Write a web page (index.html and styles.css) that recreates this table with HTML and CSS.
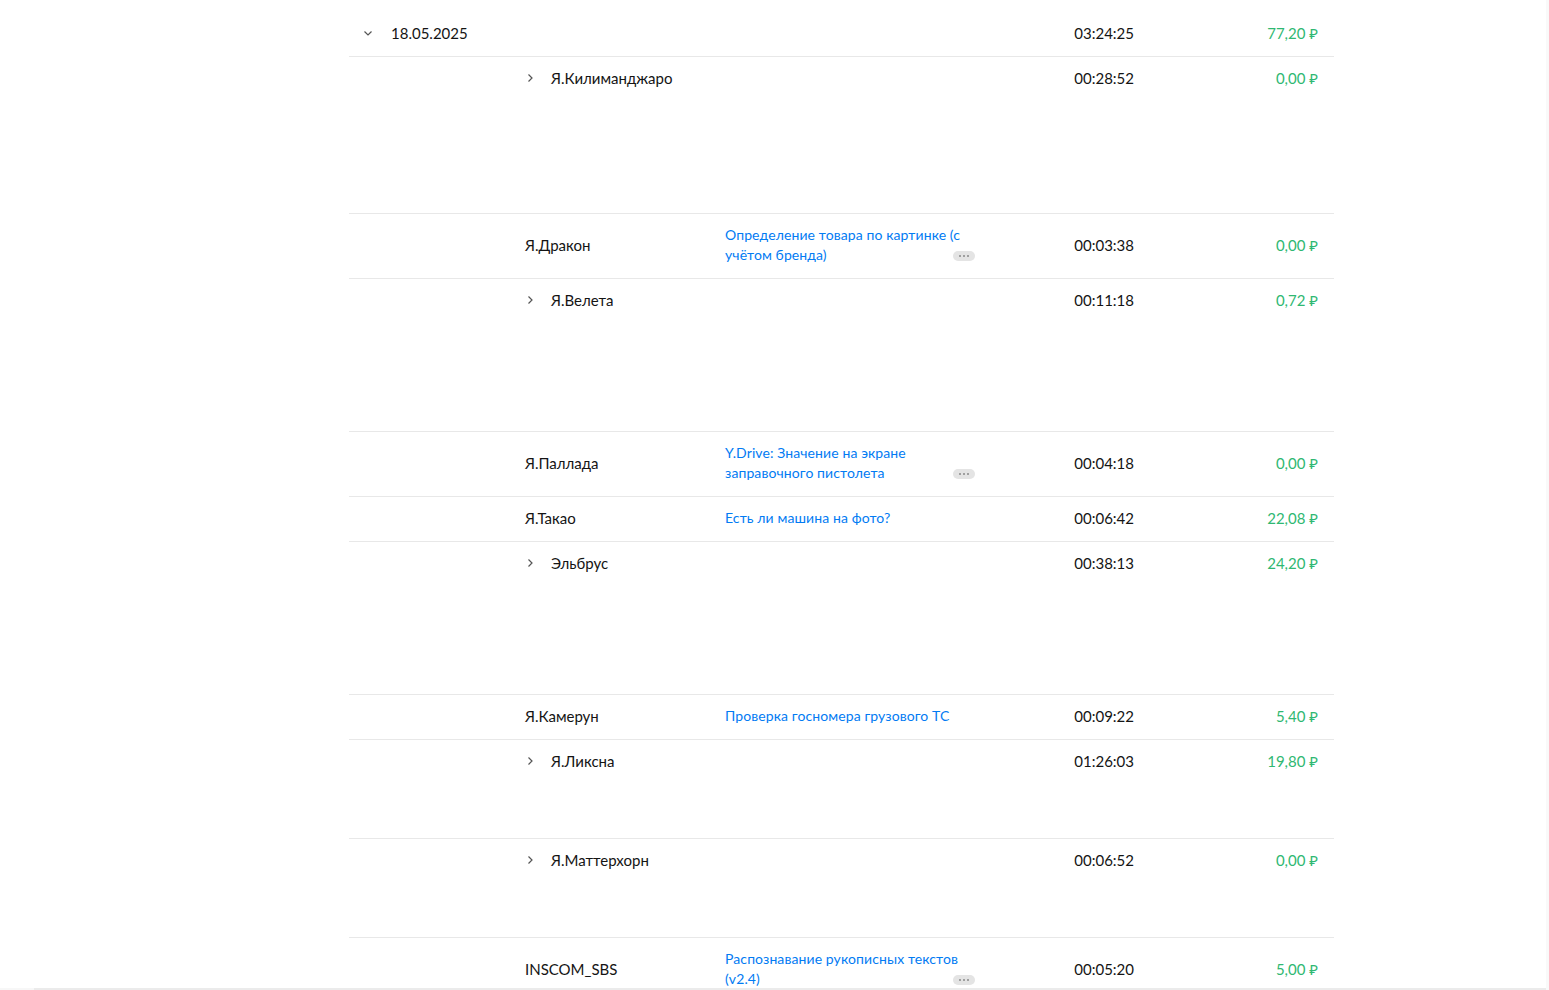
FILE: index.html
```html
<!DOCTYPE html>
<html lang="ru">
<head>
    <meta charset="UTF-8">
    <meta name="viewport" content="width=device-width, initial-scale=1.0">
    <title>Детализация по дням</title>
    <link rel="stylesheet" href="styles.css">
</head>
<body>

    <main class="page">
        <div class="table">

            <!-- Day group -->
            <div class="row row-date">
                <div class="cell-day">
                    <svg class="chevron" width="10" height="10" viewBox="0 0 10 10"><path d="M1.5 3.5 L5 7 L8.5 3.5" fill="none" stroke="#555" stroke-width="1.2"/></svg>
                    <span>18.05.2025</span>
                </div>
                <div class="cell-time">03:24:25</div>
                <div class="cell-cost">77,20 ₽</div>
            </div>

            <div class="row row-open row-h157">
                <div class="cell-name">
                    <svg class="chevron" width="10" height="10" viewBox="0 0 10 10"><path d="M3.5 1.5 L7 5 L3.5 8.5" fill="none" stroke="#555" stroke-width="1.2"/></svg>
                    <span>Я.Килиманджаро</span>
                </div>
                <div class="cell-task"></div>
                <div class="cell-time">00:28:52</div>
                <div class="cell-cost">0,00 ₽</div>
            </div>

            <div class="row">
                <div class="cell-name">Я.Дракон</div>
                <div class="cell-task">
                    <a href="#" class="task-link">Определение товара по картинке (с учётом бренда)</a>
                    <span class="more"><i></i><i></i><i></i></span>
                </div>
                <div class="cell-time">00:03:38</div>
                <div class="cell-cost">0,00 ₽</div>
            </div>

            <div class="row row-open row-h153">
                <div class="cell-name">
                    <svg class="chevron" width="10" height="10" viewBox="0 0 10 10"><path d="M3.5 1.5 L7 5 L3.5 8.5" fill="none" stroke="#555" stroke-width="1.2"/></svg>
                    <span>Я.Велета</span>
                </div>
                <div class="cell-task"></div>
                <div class="cell-time">00:11:18</div>
                <div class="cell-cost">0,72 ₽</div>
            </div>

            <div class="row">
                <div class="cell-name">Я.Паллада</div>
                <div class="cell-task">
                    <a href="#" class="task-link">Y.Drive: Значение на экране заправочного пистолета</a>
                    <span class="more"><i></i><i></i><i></i></span>
                </div>
                <div class="cell-time">00:04:18</div>
                <div class="cell-cost">0,00 ₽</div>
            </div>

            <div class="row">
                <div class="cell-name">Я.Такао</div>
                <div class="cell-task">
                    <a href="#" class="task-link">Есть ли машина на фото?</a>
                </div>
                <div class="cell-time">00:06:42</div>
                <div class="cell-cost">22,08 ₽</div>
            </div>

            <div class="row row-open row-h153">
                <div class="cell-name">
                    <svg class="chevron" width="10" height="10" viewBox="0 0 10 10"><path d="M3.5 1.5 L7 5 L3.5 8.5" fill="none" stroke="#555" stroke-width="1.2"/></svg>
                    <span>Эльбрус</span>
                </div>
                <div class="cell-task"></div>
                <div class="cell-time">00:38:13</div>
                <div class="cell-cost">24,20 ₽</div>
            </div>

            <div class="row">
                <div class="cell-name">Я.Камерун</div>
                <div class="cell-task">
                    <a href="#" class="task-link">Проверка госномера грузового ТС</a>
                </div>
                <div class="cell-time">00:09:22</div>
                <div class="cell-cost">5,40 ₽</div>
            </div>

            <div class="row row-open row-h99">
                <div class="cell-name">
                    <svg class="chevron" width="10" height="10" viewBox="0 0 10 10"><path d="M3.5 1.5 L7 5 L3.5 8.5" fill="none" stroke="#555" stroke-width="1.2"/></svg>
                    <span>Я.Ликсна</span>
                </div>
                <div class="cell-task"></div>
                <div class="cell-time">01:26:03</div>
                <div class="cell-cost">19,80 ₽</div>
            </div>

            <div class="row row-open row-h99">
                <div class="cell-name">
                    <svg class="chevron" width="10" height="10" viewBox="0 0 10 10"><path d="M3.5 1.5 L7 5 L3.5 8.5" fill="none" stroke="#555" stroke-width="1.2"/></svg>
                    <span>Я.Маттерхорн</span>
                </div>
                <div class="cell-task"></div>
                <div class="cell-time">00:06:52</div>
                <div class="cell-cost">0,00 ₽</div>
            </div>

            <div class="row">
                <div class="cell-name">INSCOM_SBS</div>
                <div class="cell-task">
                    <a href="#" class="task-link">Распознавание рукописных текстов (v2.4)</a>
                    <span class="more"><i></i><i></i><i></i></span>
                </div>
                <div class="cell-time">00:05:20</div>
                <div class="cell-cost">5,00 ₽</div>
            </div>

        </div>
    </main>

    <!-- Scrollbar tracks -->
    <div class="scroll-x"><span class="scroll-x-thumb"></span></div>
    <div class="scroll-y"></div>

</body>
</html>
```

FILE: styles.css
```css
/* General Page Styling */
body {
    font-family: Lato, 'Noto Sans', sans-serif;
    margin: 0;
    padding: 0;
    background: #FFFFFF;
    color: #141414;
    overflow: hidden;
    height: 990px;
}

/* Main Content */
.page {
    padding: 11px 0 0 349px;
}

.table {
    width: 985px;
}

/* Rows */
.row {
    display: grid;
    grid-template-columns: 176px 200px 250px 159px 184px;
    padding: 11px 16px 13px 0;
    border-bottom: 1px solid #E8E8E8;
    font-size: 15px;
    line-height: 20px;
    align-items: center;
    box-sizing: border-box;
}

.row::before {
    content: "";
}

.row-date {
    grid-template-columns: 626px 159px 184px;
    padding-top: 12px;
}

.row-date::before {
    display: none;
}

/* Expanded rows keep their text at the top */
.row-open {
    align-items: start;
    padding-top: 11px;
}

.row-h157 { height: 157px; }
.row-h153 { height: 153px; }
.row-h99 { height: 99px; }

/* Cells */
.cell-day {
    display: flex;
    align-items: center;
    padding-left: 14px;
}

.cell-day .chevron {
    margin-right: 18px;
}

.cell-name {
    display: flex;
    align-items: center;
}

.cell-name .chevron {
    margin-right: 16px;
}

.cell-task {
    position: relative;
    font-size: 14px;
}

.task-link {
    display: block;
    width: 240px;
    color: #027BF3;
    text-decoration: none;
    letter-spacing: 0.1px;
}

/* Small "more" pill */
.more {
    position: absolute;
    right: 0;
    bottom: 4px;
    width: 22px;
    height: 10px;
    border-radius: 5px;
    background: #E4E4E4;
    display: flex;
    align-items: center;
    justify-content: center;
    gap: 2px;
}

.more i {
    width: 2px;
    height: 2px;
    border-radius: 50%;
    background: #8A8A8A;
}

.cell-time {
    text-align: right;
    font-variant-numeric: tabular-nums;
}

.cell-cost {
    text-align: right;
    color: #2FB872;
}

/* Scrollbar tracks */
.scroll-x {
    position: fixed;
    left: 0;
    right: 0;
    bottom: 0;
    height: 2px;
    background: #F7F7F7;
}

.scroll-x-thumb {
    position: absolute;
    left: 34px;
    right: 2px;
    top: 0;
    bottom: 0;
    background: #EBEBEB;
}

.scroll-y {
    position: fixed;
    top: 0;
    right: 0;
    bottom: 0;
    width: 3px;
    background: #F9F9F9;
}
```
